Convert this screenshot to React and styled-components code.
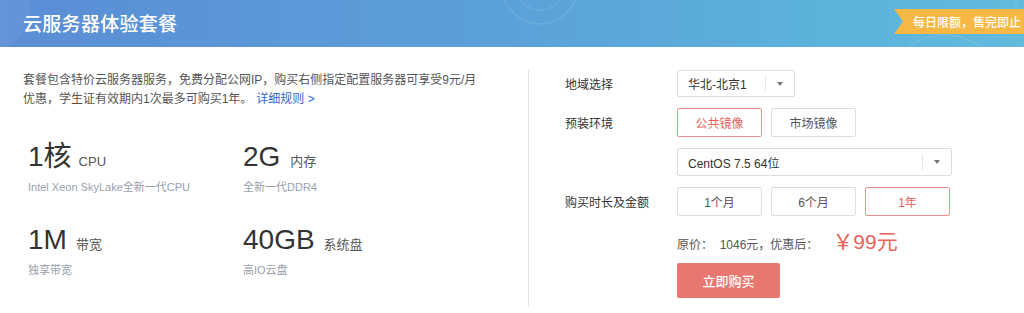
import React from 'react';
import styled, { createGlobalStyle } from 'styled-components';

const GlobalStyle = createGlobalStyle`
  body {
    margin: 0;
    background: #fff;
    font-family: "Liberation Sans", "Noto Sans CJK SC", sans-serif;
    color: #333;
  }
`;

const Page = styled.div`
  width: 1024px;
  height: 313px;
  overflow: hidden;
`;

const Header = styled.div`
  position: relative;
  height: 47px;
  padding: 0 0 3px 23px;
  box-sizing: border-box;
  display: flex;
  align-items: center;
  background: linear-gradient(90deg, #5b8dd5 0%, #5a9fd9 45%, #5cb2db 80%, #62badd 100%);
  overflow: hidden;
`;

const Title = styled.h1`
  margin: 0;
  font-size: 19px;
  font-weight: 500;
  color: #fff;
  letter-spacing: 0.3px;
  position: relative;
`;

const Deco = styled.svg`
  position: absolute;
  left: 0;
  top: 0;
  pointer-events: none;
`;

const Ribbon = styled.div`
  position: absolute;
  left: 894px;
  top: 9px;
  width: 140px;
  height: 25px;
  padding-left: 19px;
  box-sizing: border-box;
  display: flex;
  align-items: center;
  background: #f5b844;
  color: #fff;
  font-size: 12px;
  font-weight: 500;
  white-space: nowrap;
  clip-path: polygon(0 0, 100% 0, 100% 100%, 0 100%, 9px 50%);
`;

const Body = styled.div`
  display: flex;
  padding-top: 23px;
`;

const LeftCol = styled.div`
  width: 529px;
  height: 237px;
  box-sizing: border-box;
  border-right: 1px solid #e2e2e2;
  padding: 1px 0 0 23px;
`;

const Desc = styled.p`
  margin: 0;
  width: 462px;
  font-size: 12px;
  line-height: 19px;
  color: #555;
`;

const Link = styled.a`
  color: #3068c8;
  text-decoration: none;
  margin-left: 4px;
`;

const SpecGrid = styled.div`
  display: grid;
  grid-template-columns: 215px 215px;
  row-gap: 30px;
  margin: 32px 0 0 5px;
`;

const Spec = styled.div`
  display: flex;
  flex-direction: column;
`;

const SpecMain = styled.div`
  display: flex;
  align-items: baseline;
`;

const Big = styled.span`
  font-size: 28px;
  line-height: 32px;
  color: #333;
`;

const Unit = styled.span`
  font-size: 13px;
  color: #555;
  margin-left: ${p => p.$gap || 9}px;
`;

const SpecSub = styled.div`
  margin-top: 7px;
  font-size: 11px;
  line-height: 14px;
  color: #98a0ac;
`;

const RightCol = styled.div`
  flex: 1;
  padding-left: 36px;
`;

const Row = styled.div`
  display: flex;
  align-items: center;
  margin-top: ${p => p.$mt || 0}px;
`;

const Label = styled.div`
  width: 112px;
  font-size: 12px;
  color: #333;
`;

const Select = styled.div`
  width: ${p => p.$w}px;
  height: ${p => p.$h}px;
  box-sizing: border-box;
  border: 1px solid #dcdcdc;
  border-radius: 2px;
  display: flex;
  align-items: center;
  font-size: 12px;
  color: #333;
`;

const SelectText = styled.div`
  flex: 1;
  padding-left: 10px;
`;

const Caret = styled.div`
  width: 28px;
  height: 60%;
  border-left: 1px solid #e6e6e6;
  display: flex;
  align-items: center;
  justify-content: center;
  &::after {
    content: '';
    border-left: 3.5px solid transparent;
    border-right: 3.5px solid transparent;
    border-top: 4px solid #777;
  }
`;

const Options = styled.div`
  display: flex;
  gap: 9px;
`;

const Option = styled.div`
  width: 85px;
  height: 29px;
  box-sizing: border-box;
  border: 1px solid ${p => (p.$active ? '#f0918b' : '#dedede')};
  border-radius: 2px;
  display: flex;
  align-items: center;
  justify-content: center;
  font-size: 12px;
  color: ${p => (p.$active ? '#e8625a' : '#555')};
`;

const Price = styled.div`
  display: flex;
  align-items: baseline;
  height: 24px;
  margin: 9px 0 0 112px;
  font-size: 12px;
  color: #555;
`;

const Amount = styled.span`
  margin-left: 14px;
  font-size: 21px;
  color: #e8625a;
`;

const BuyButton = styled.button`
  display: block;
  margin: 14px 0 0 112px;
  width: 103px;
  height: 35px;
  border: none;
  border-radius: 2px;
  background: #e8776f;
  color: #fff;
  font-family: inherit;
  font-size: 13px;
  font-weight: 500;
`;

const specs = [
  { big: '1核', unit: 'CPU', sub: 'Intel Xeon SkyLake全新一代CPU', gap: 7 },
  { big: '2G', unit: '内存', sub: '全新一代DDR4', gap: 10 },
  { big: '1M', unit: '带宽', sub: '独享带宽', gap: 9 },
  { big: '40GB', unit: '系统盘', sub: '高IO云盘', gap: 9 },
];

export default function App() {
  return (
    <Page>
      <GlobalStyle />
      <Header>
        <Deco width="1024" height="47" viewBox="0 0 1024 47">
          <g fill="none" stroke="#ffffff" strokeOpacity="0.1" strokeWidth="1.5">
            <circle cx="540" cy="-14" r="24" />
            <circle cx="540" cy="-14" r="38" />
            <circle cx="945" cy="95" r="60" />
            <circle cx="1060" cy="-5" r="45" />
          </g>
          <circle cx="-10" cy="10" r="40" fill="#ffffff" fillOpacity="0.06" />
        </Deco>
        <Title>云服务器体验套餐</Title>
        <Ribbon>每日限额，售完即止</Ribbon>
      </Header>
      <Body>
        <LeftCol>
          <Desc>
            套餐包含特价云服务器服务，免费分配公网IP，购买右侧指定配置服务器可享受9元/月优惠，学生证有效期内1次最多可购买1年。
            <Link href="#">详细规则 &gt;</Link>
          </Desc>
          <SpecGrid>
            {specs.map(s => (
              <Spec key={s.big}>
                <SpecMain>
                  <Big>{s.big}</Big>
                  <Unit $gap={s.gap}>{s.unit}</Unit>
                </SpecMain>
                <SpecSub>{s.sub}</SpecSub>
              </Spec>
            ))}
          </SpecGrid>
        </LeftCol>
        <RightCol>
          <Row>
            <Label>地域选择</Label>
            <Select $w={118} $h={27}>
              <SelectText>华北-北京1</SelectText>
              <Caret />
            </Select>
          </Row>
          <Row $mt={11}>
            <Label>预装环境</Label>
            <Options>
              <Option $active>公共镜像</Option>
              <Option>市场镜像</Option>
            </Options>
          </Row>
          <Row $mt={11}>
            <Label />
            <Select $w={275} $h={28}>
              <SelectText>CentOS 7.5 64位</SelectText>
              <Caret />
            </Select>
          </Row>
          <Row $mt={11}>
            <Label>购买时长及金额</Label>
            <Options>
              <Option>1个月</Option>
              <Option>6个月</Option>
              <Option $active>1年</Option>
            </Options>
          </Row>
          <Price>
            原价：&nbsp; 1046元，优惠后：
            <Amount>￥99元</Amount>
          </Price>
          <BuyButton>立即购买</BuyButton>
        </RightCol>
      </Body>
    </Page>
  );
}
